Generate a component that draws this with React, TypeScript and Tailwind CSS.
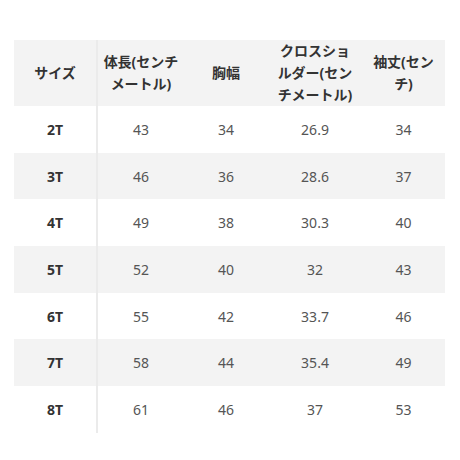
const headers: React.ReactNode[] = [
  "サイズ",
  <>体長(センチ<br />メートル)</>,
  "胸幅",
  <>クロスショ<br />ルダー(セン<br />チメートル)</>,
  <>袖丈(セン<br />チ)</>,
];

const rows = [
  ["2T", "43", "34", "26.9", "34"],
  ["3T", "46", "36", "28.6", "37"],
  ["4T", "49", "38", "30.3", "40"],
  ["5T", "52", "40", "32", "43"],
  ["6T", "55", "42", "33.7", "46"],
  ["7T", "58", "44", "35.4", "49"],
  ["8T", "61", "46", "37", "53"],
];

const cols = "grid grid-cols-[84px_86px_84px_94px_83px]";

export default function App() {
  return (
    <main
      className="w-[460px] h-[460px] bg-white pt-10 pl-[14px]"
      style={{ fontFamily: '"Noto Sans", "Noto Sans CJK JP", sans-serif' }}
    >
      <div className="w-[431px]">
        <div className={`${cols} h-[66px] bg-[#f3f3f3]`}>
          {headers.map((h, i) => (
            <div
              key={i}
              className={`flex items-center justify-center text-center text-[14px] leading-[22px] font-bold text-[#333] ${
                i === 0 ? "border-r-2 border-[#ebebeb]" : ""
              }`}
            >
              <span>{h}</span>
            </div>
          ))}
        </div>
        {rows.map((r, ri) => (
          <div
            key={r[0]}
            className={`${cols} h-[46.7px] ${ri % 2 === 1 ? "bg-[#f3f3f3]" : "bg-white"}`}
          >
            {r.map((c, ci) => (
              <div
                key={ci}
                className={`flex items-center justify-center text-[14px] ${
                  ci === 0
                    ? "font-bold text-[#333] border-r-2 border-[#ebebeb]"
                    : "text-[#555]"
                }`}
              >
                {c}
              </div>
            ))}
          </div>
        ))}
      </div>
    </main>
  );
}
